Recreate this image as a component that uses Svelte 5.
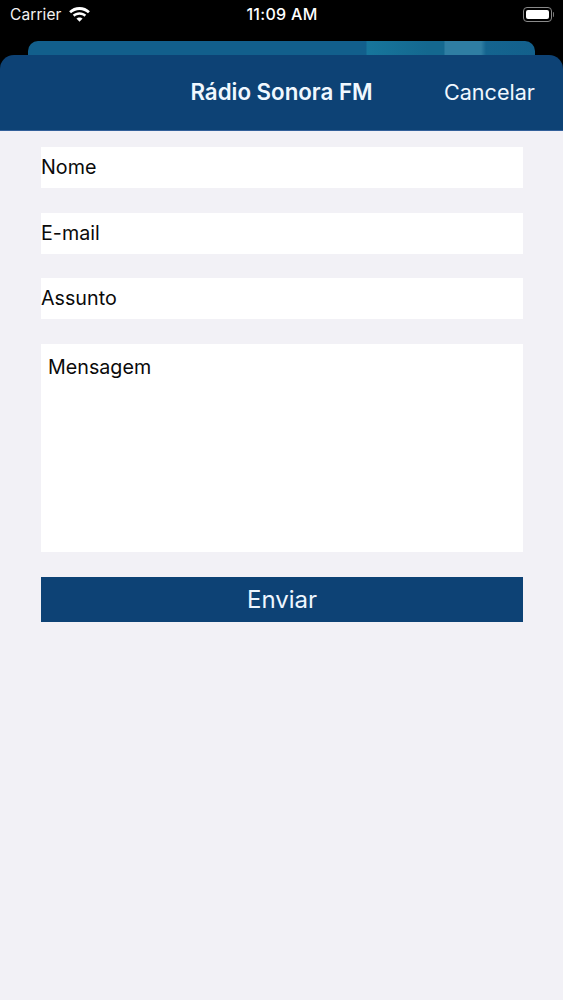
<script>
  const fields = ['Nome', 'E-mail', 'Assunto'];
</script>

<div class="screen">
  <div class="statusbar">
    <div class="carrier">
      <span>Carrier</span>
      <svg width="21" height="15" viewBox="1 0.500 19 14" preserveAspectRatio="none">
        <path d="M10.5 3.2c3 0 5.7 1.2 7.7 3.1l1.7-1.8C17.400 2.100 14.100.6 10.500.6S3.600 2.100 1.100 4.500l1.700 1.800c2-1.900 4.700-3.100 7.700-3.100z" fill="#fff"/>
        <path d="M10.500 7.800c1.700 0 3.200.7 4.400 1.700l1.700-1.800c-1.600-1.500-3.800-2.400-6.100-2.400s-4.500.9-6.100 2.400l1.700 1.800c1.200-1 2.700-1.700 4.400-1.700z" fill="#fff"/>
        <path d="M10.500 10.200c-1.100 0-2.100.4-2.800 1.100l2.800 3 2.800-3c-.7-.7-1.700-1.100-2.800-1.100z" fill="#fff"/>
      </svg>
    </div>
    <div class="time">11:09 AM</div>
    <div class="battery">
      <div class="battery-body"><div class="battery-fill"></div></div>
      <div class="battery-cap"></div>
    </div>
  </div>

  <div class="back-sheet"></div>

  <div class="header">
    <div class="title">Rádio Sonora FM</div>
    <div class="cancel">Cancelar</div>
  </div>

  <div class="form">
    {#each fields as field}
      <div class="field">{field}</div>
    {/each}
    <div class="message">Mensagem</div>
    <div class="send">Enviar</div>
  </div>
</div>

<style>
:global(body) {
  margin: 0;
  background: #f2f1f6;
}

.screen {
  width: 563px;
  height: 1000px;
  display: flex;
  flex-direction: column;
  background: #000;
  font-family: Inter, "Noto Sans", sans-serif;
  overflow: hidden;
}

.statusbar {
  height: 41px;
  flex: none;
  display: grid;
  grid-template-columns: 1fr auto 1fr;
  align-items: start;
  padding: 0 9px 0 10px;
  color: #fff;
}

.carrier {
  display: flex;
  align-items: center;
  gap: 7px;
  height: 28px;
  font-size: 15.500px;
  letter-spacing: 0.1px;
  color: #f2f2f2;
}

.time {
  height: 28px;
  line-height: 29px;
  font-size: 16px;
  font-weight: 500;
  letter-spacing: 0.3px;
}

.battery {
  justify-self: end;
  display: flex;
  align-items: center;
  gap: 1px;
  height: 28px;
}

.battery-body {
  width: 29px;
  height: 15px;
  padding: 2px;
  box-sizing: border-box;
  border: 1px solid #8a8a8a;
  border-radius: 4px;
}

.battery-fill {
  height: 100%;
  background: #fff;
  border-radius: 2px;
}

.battery-cap {
  width: 1.500px;
  height: 5px;
  background: #777;
  border-radius: 0 1px 1px 0;
}

.back-sheet {
  height: 14px;
  flex: none;
  margin: 0 28px;
  border-radius: 10px 10px 0 0;
  background: linear-gradient(90deg,
    #125f8c 0, #125f8c 338px,
    #17769c 339px, #14688f 400px, #14688f 416px,
    #2f7ea3 417px, #2f7ea3 453px,
    #14648f 458px, #13608c 100%);
}

.header {
  height: 76px;
  flex: none;
  display: flex;
  align-items: center;
  justify-content: flex-end;
  padding: 0 28px 2px 0;
  box-sizing: border-box;
  background: #0d4275;
  border-radius: 14px 14px 0 0;
  border-bottom: 1px solid #33609a;
  color: #f0f8ff;
  position: relative;
}

.title {
  position: absolute;
  left: 0;
  right: 0;
  text-align: center;
  font-size: 22.300px;
  font-weight: 600;
}

.cancel {
  font-size: 21.600px;
}

.form {
  flex: 1;
  display: flex;
  flex-direction: column;
  gap: 24.500px;
  padding: 16px 40px 0 41px;
  background: #f2f1f6;
  color: #0a0a0a;
}

.field {
  height: 41px;
  line-height: 40px;
  background: #fff;
  font-size: 19.700px;
}

.message {
  height: 208px;
  padding: 11px 7px;
  box-sizing: border-box;
  background: #fff;
  font-size: 19.700px;
}

.send {
  height: 45px;
  line-height: 45px;
  margin-top: 1px;
  text-align: center;
  background: #0d4275;
  color: #eef6ff;
  font-size: 24px;
}
</style>
